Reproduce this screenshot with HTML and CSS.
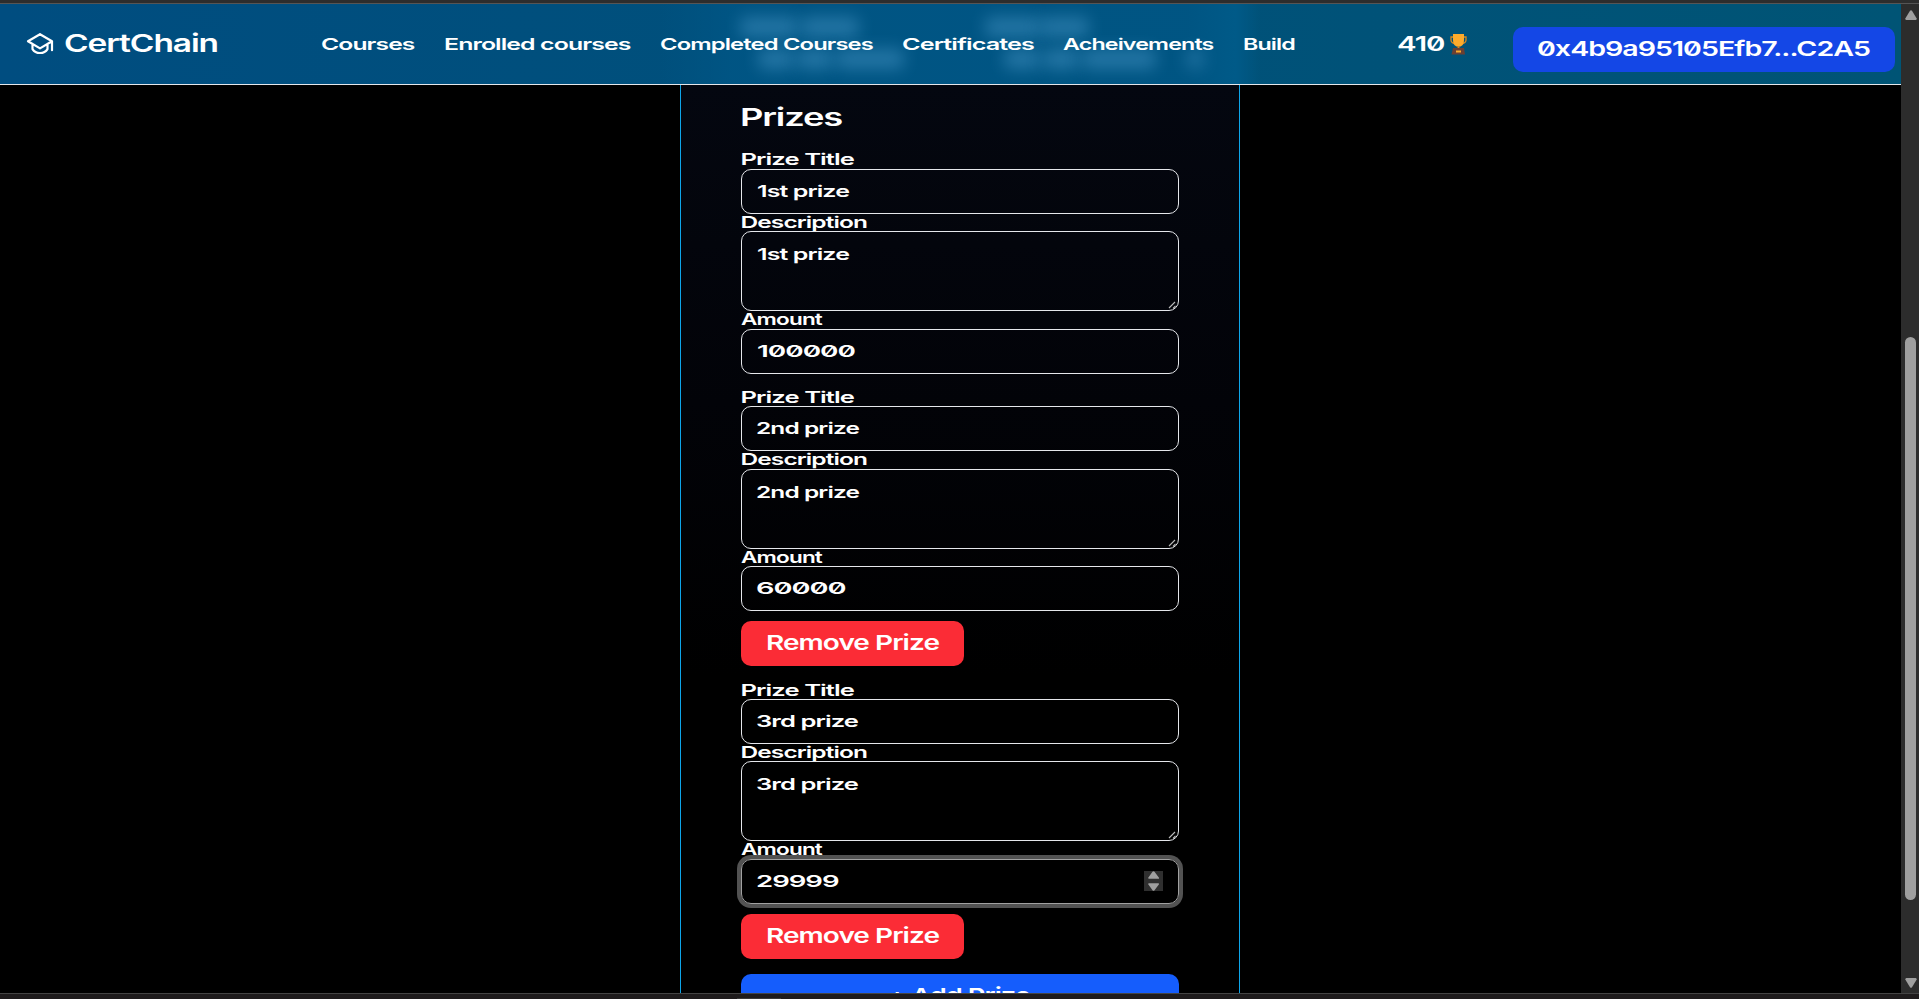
FILE: index.html
```html
<!DOCTYPE html>
<html lang="en">
<head>
<meta charset="utf-8">
<title>CertChain</title>
<link rel="stylesheet" href="styles.css">
</head>
<body>
<div class="edge-top"></div>
<div class="view">
  <div class="page">
    <header class="nav">
      <div class="glow">
        <i class="g g1"></i><i class="g g2"></i><i class="g g3"></i><i class="g g4"></i>
        <i class="g g5"></i><i class="g g6"></i><i class="g g7"></i><i class="g g8"></i>
        <i class="g g9"></i><i class="g g10"></i><i class="g g11"></i>
      </div>
      <div class="brand">
        <svg class="cap" width="28" height="22" viewBox="0 0 28 22"><path d="M14 1.2 26 8.2v9M14 1.2 2 8.2l12 7.2 12-7.2M6.5 11.5v4.6c3.2 5.2 11.8 5.2 15 0v-4.6"/></svg>
        <svg class="t lg" width="155" height="28"><text x="-1" y="22" textLength="154" lengthAdjust="spacingAndGlyphs">CertChain</text></svg>
      </div>
      <nav class="links">
        <svg class="t" width="93" height="24"><text x="-1" y="18" textLength="93.5" lengthAdjust="spacingAndGlyphs">Courses</text></svg>
        <svg class="t" width="186" height="24"><text x="-1" y="18" textLength="186.5" lengthAdjust="spacingAndGlyphs">Enrolled courses</text></svg>
        <svg class="t" width="213" height="24"><text x="-1" y="18" textLength="213" lengthAdjust="spacingAndGlyphs">Completed Courses</text></svg>
        <svg class="t" width="131" height="24"><text x="-2" y="18" textLength="132" lengthAdjust="spacingAndGlyphs">Certificates</text></svg>
        <svg class="t" width="150" height="24"><text x="-2" y="18" textLength="150.5" lengthAdjust="spacingAndGlyphs">Acheivements</text></svg>
        <svg class="t" width="52" height="24"><text x="-2" y="18" textLength="52" lengthAdjust="spacingAndGlyphs">Build</text></svg>
      </nav>
      <div class="score">
        <svg class="t md" width="48" height="26"><text x="-1" y="20" textLength="47.5" lengthAdjust="spacingAndGlyphs">410</text></svg>
        <svg class="cup" width="17" height="21" viewBox="0 0 17 21"><path d="M3 3H1v3q0 3 4 3.5M14 3h2v3q0 3-4 3.5" fill="none" stroke="#d88a20" stroke-width="1.3"/><path d="M3 0h11v6q0 5-3.5 6.5h-4Q3 11 3 6z" fill="#fdab2b"/><path d="M7.5 12h2v3h-2z" fill="#d8861e"/><path d="M3 14h11l1 6.500H1.500z" fill="#6b4033"/><path d="M6 16.500h5v2H6z" fill="#fdab2b"/></svg>
      </div>
      <div class="btn wallet"><svg class="t md" width="332" height="36"><text x="-1" y="29" textLength="333" lengthAdjust="spacingAndGlyphs">0x4b9a95105Efb7...C2A5</text></svg></div>
    </header>
    <main class="card">
      <svg class="t lg title" width="102" height="30"><text x="-1" y="24" textLength="102" lengthAdjust="spacingAndGlyphs">Prizes</text></svg>
      <section class="prize">
        <div class="label"><svg class="t" width="114" height="20"><text x="-.5" y="14" textLength="113.500" lengthAdjust="spacingAndGlyphs">Prize Title</text></svg></div>
        <div class="field"><svg class="t" width="93" height="40"><text x="0" y="27" textLength="92" lengthAdjust="spacingAndGlyphs">1st prize</text></svg></div>
        <div class="label"><svg class="t" width="126" height="20"><text x="-.5" y="14" textLength="126.500" lengthAdjust="spacingAndGlyphs">Description</text></svg></div>
        <div class="field area"><svg class="t" width="93" height="40"><text x="0" y="28" textLength="92" lengthAdjust="spacingAndGlyphs">1st prize</text></svg><svg class="grip" width="8" height="8"><path d="M1 7 7 1M5 7.500 7.500 5"/></svg></div>
        <div class="label"><svg class="t" width="82" height="20"><text x="0" y="14" textLength="81" lengthAdjust="spacingAndGlyphs">Amount</text></svg></div>
        <div class="field"><svg class="t" width="99" height="40"><text x="0" y="27" textLength="98" lengthAdjust="spacingAndGlyphs">100000</text></svg></div>
      </section>
      <section class="prize">
        <div class="label"><svg class="t" width="114" height="20"><text x="-.5" y="14" textLength="113.500" lengthAdjust="spacingAndGlyphs">Prize Title</text></svg></div>
        <div class="field"><svg class="t" width="103" height="40"><text x="-1" y="27" textLength="103" lengthAdjust="spacingAndGlyphs">2nd prize</text></svg></div>
        <div class="label"><svg class="t" width="126" height="20"><text x="-.5" y="14" textLength="126.500" lengthAdjust="spacingAndGlyphs">Description</text></svg></div>
        <div class="field area"><svg class="t" width="103" height="40"><text x="-1" y="28" textLength="103" lengthAdjust="spacingAndGlyphs">2nd prize</text></svg><svg class="grip" width="8" height="8"><path d="M1 7 7 1M5 7.500 7.500 5"/></svg></div>
        <div class="label"><svg class="t" width="82" height="20"><text x="0" y="14" textLength="81" lengthAdjust="spacingAndGlyphs">Amount</text></svg></div>
        <div class="field"><svg class="t" width="90" height="40"><text x="-1" y="27" textLength="89.500" lengthAdjust="spacingAndGlyphs">60000</text></svg></div>
        <div class="btn remove"><svg class="t md" width="174" height="36"><text x="0" y="29" textLength="173" lengthAdjust="spacingAndGlyphs">Remove Prize</text></svg></div>
      </section>
      <section class="prize">
        <div class="label"><svg class="t" width="114" height="20"><text x="-.5" y="14" textLength="113.500" lengthAdjust="spacingAndGlyphs">Prize Title</text></svg></div>
        <div class="field"><svg class="t" width="102" height="40"><text x="-1" y="27" textLength="102" lengthAdjust="spacingAndGlyphs">3rd prize</text></svg></div>
        <div class="label"><svg class="t" width="126" height="20"><text x="-.5" y="14" textLength="126.500" lengthAdjust="spacingAndGlyphs">Description</text></svg></div>
        <div class="field area"><svg class="t" width="102" height="40"><text x="-1" y="28" textLength="102" lengthAdjust="spacingAndGlyphs">3rd prize</text></svg><svg class="grip" width="8" height="8"><path d="M1 7 7 1M5 7.500 7.500 5"/></svg></div>
        <div class="label"><svg class="t" width="82" height="20"><text x="0" y="14" textLength="81" lengthAdjust="spacingAndGlyphs">Amount</text></svg></div>
        <div class="field focus"><svg class="t" width="83" height="40"><text x="-1" y="27" textLength="82.500" lengthAdjust="spacingAndGlyphs">29999</text></svg>
          <svg class="spin" width="19" height="20" viewBox="0 0 19 20"><path d="M0 0h19v20H0z" fill="#2f2f2f"/><path d="M8.500.800q1-1 2 0L15 6.800q.300 1-.8 1H5q-1-.1-.8-1zM8.500 19.200q1 1 2 0L15 13.200q.300-1-.8-1H5q-1 .1-.8 1z" fill="#9f9f9f"/></svg>
        </div>
        <div class="btn remove"><svg class="t md" width="174" height="36"><text x="0" y="29" textLength="173" lengthAdjust="spacingAndGlyphs">Remove Prize</text></svg></div>
      </section>
      <div class="btn add"><svg class="t md" width="140" height="36"><text x="-2" y="29" textLength="142" lengthAdjust="spacingAndGlyphs">+ Add Prize</text></svg></div>
    </main>
  </div>
  <aside class="scroll">
    <svg width="12" height="10"><path d="M5 .800q1-1 2 0L11.700 8.500q0 1.500-1 1.500H1.300q-1 0-1-1.500z"/></svg>
    <div class="thumb"></div>
    <svg width="12" height="10"><path d="M5 9.200q1 1 2 0L11.700 1.500q0-1.500-1-1.500H1.300q-1 0-1 1.500z"/></svg>
  </aside>
</div>
<div class="edge-bottom"><i></i></div>
</body>
</html>
```
FILE: styles.css
```css
* { box-sizing: border-box; }
body {
  margin: 0;
  width: 1919px;
  height: 999px;
  overflow: hidden;
  background: #000;
  display: flex;
  flex-direction: column;
}
svg { display: block; flex: none; }
.edge-top { height: 4px; flex: none; background: #2d2d2d; border-bottom: 1px solid #555; }
.view { flex: none; height: 989px; display: flex; overflow: hidden; }
.page { width: 1901px; height: 989px; overflow: hidden; }

/* text */
.t { overflow: visible; }
.t text {
  font-family: Inter, "DejaVu Sans", sans-serif;
  font-feature-settings: "zero" 1;
  font-weight: 600;
  font-size: 16.5px;
  letter-spacing: -0.6px;
  fill: #fff;
}
.md text { font-size: 20.5px; letter-spacing: -0.7px; }
.lg text { font-size: 24.5px; letter-spacing: -0.8px; }

/* navigation */
.nav {
  position: relative;
  height: 81px;
  display: flex;
  border-bottom: 1px solid #e5e7eb;
  background: linear-gradient(90deg, #004d80, #005475);
}
.brand { position: relative; display: flex; width: 322px; padding: 26px 0 0 65px; }
.cap { position: absolute; left: 26px; top: 29px; fill: none; stroke: #fff; stroke-width: 2.2; stroke-linejoin: round; stroke-linecap: round; }
.links { position: relative; display: flex; gap: 30px; width: 1076px; padding-top: 28px; }
.score { position: relative; display: flex; gap: 4px; width: 115px; padding-top: 27px; }
.cup { margin-top: 3px; }
.glow {
  position: absolute;
  left: 660px;
  top: 0;
  width: 600px;
  height: 80px;
  background: linear-gradient(90deg, rgba(0, 88, 138, 0), rgba(0, 86, 134, .75) 12%, rgba(0, 86, 134, .75) 88%, #005a88 96%, rgba(0, 92, 139, 0));
}
.g { position: absolute; height: 20px; border-radius: 6px; background: #2f80b0; opacity: .75; filter: blur(8px); }
.g1 { left: 80px; top: 13px; width: 58px; }
.g2 { left: 141px; top: 13px; width: 58px; }
.g3 { left: 325px; top: 13px; width: 56px; }
.g4 { left: 380px; top: 13px; width: 49px; }
.g5 { left: 98px; top: 45px; width: 36px; }
.g6 { left: 137px; top: 45px; width: 36px; }
.g7 { left: 176px; top: 45px; width: 68px; }
.g8 { left: 344px; top: 45px; width: 36px; }
.g9 { left: 383px; top: 45px; width: 36px; }
.g10 { left: 422px; top: 45px; width: 74px; }
.g11 { left: 526px; top: 45px; width: 18px; opacity: .6; }

/* buttons */
.btn { height: 45px; border-radius: 10px; display: flex; justify-content: center; }
.wallet { position: relative; width: 382px; margin-top: 23px; background: #1447e6; }
.remove { width: 223px; margin-top: 10px; background: #fb2c36; }
.add { background: #155dfc; }

/* form card */
.card {
  width: 560px;
  height: 908px;
  margin-left: 680px;
  padding: 17px 60px 0;
  border: solid #0ea5e9;
  border-width: 0 1px;
  background: linear-gradient(#040710, #020308 35%, #000 65%);
}
.title { margin-bottom: 19.4px; }
.prize { margin-bottom: 15.4px; }
.label { height: 17.4px; }
.field {
  position: relative;
  height: 45px;
  padding-left: 14.5px;
  border: 1px solid #e5e7eb;
  border-radius: 10px;
}
.area { height: 80px; }
.grip { position: absolute; right: 2px; bottom: 1px; fill: none; stroke: #bbb; stroke-width: 1.1; }
.focus { border-color: #a1a1a1; box-shadow: 0 0 0 4px #525252; }
.spin { position: absolute; right: 15px; top: 11px; }

/* scrollbar */
.scroll {
  width: 18px;
  display: flex;
  flex-direction: column;
  align-items: center;
  padding: 6px 0 5px 1px;
  background: #2c2c2c;
  fill: #9f9f9f;
}
.thumb { width: 11px; height: 563px; margin: 317px 0 78px; border-radius: 5.5px; background: #9f9f9f; flex: none; }

.edge-bottom { position: relative; flex: none; height: 6px; border-top: 1px solid #444; background: #1e1b1c; }
.edge-bottom i { position: absolute; left: 737px; bottom: 0; width: 44px; height: 1px; background: #3a3a3a; }
```
